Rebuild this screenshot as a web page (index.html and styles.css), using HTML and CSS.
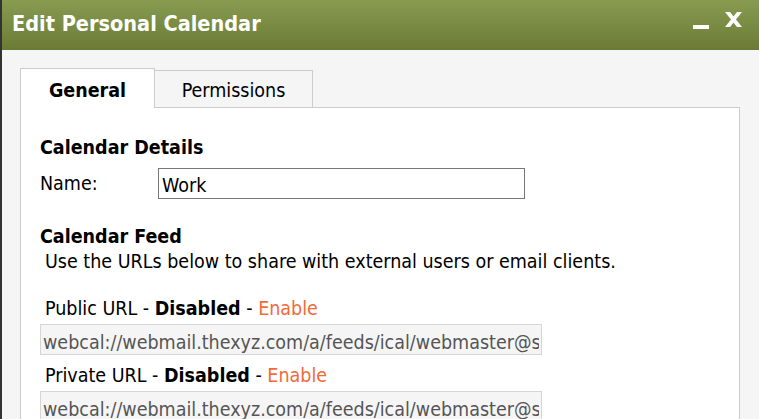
FILE: index.html
```html
<!DOCTYPE html>
<html lang="en">
<head>
    <title>Edit Personal Calendar</title>
    <meta charset="UTF-8" />
    <link rel="stylesheet" href="styles.css">
</head>
<body>
    <div class="window">
        <div class="titlebar">
            <span class="title">Edit Personal Calendar</span>
            <div class="win-controls">
                <span class="minimize"></span>
                <svg class="close" width="17" height="17" viewBox="0 0 17 17">
                    <polygon points="0,0 5,0 17,15 12,15" fill="#fff"/>
                    <polygon points="12,0 17,0 5,15 0,15" fill="#fff"/>
                </svg>
            </div>
        </div>

        <div class="content">
            <div class="tabs">
                <div class="tab active">General</div>
                <div class="tab">Permissions</div>
            </div>

            <div class="panel">
                <h3>Calendar Details</h3>
                <div class="field-row">
                    <label for="calName">Name:</label>
                    <input type="text" id="calName" class="name-input" value="Work">
                </div>

                <h3 class="feed-title">Calendar Feed</h3>
                <p class="feed-desc">Use the URLs below to share with external users or email clients.</p>

                <p class="url-label">Public URL - <b>Disabled</b> - <a href="#" class="enable">Enable</a></p>
                <input type="text" class="url-input" readonly value="webcal://webmail.thexyz.com/a/feeds/ical/webmaster@sample.com/work.ics">

                <p class="url-label private">Private URL - <b>Disabled</b> - <a href="#" class="enable">Enable</a></p>
                <input type="text" class="url-input" readonly value="webcal://webmail.thexyz.com/a/feeds/ical/webmaster@sample.com/private/work.ics">
            </div>
        </div>
    </div>
</body>
</html>
```
FILE: styles.css
```css
body {
    margin: 0;
    background: #f5f5f5;
    font-family: "DejaVu Sans Condensed", "DejaVu Sans", sans-serif;
    font-size: 19.5px;
    line-height: 24px;
    color: #000;
}
.window {
    border-left: 2px solid #333;
    height: 419px;
    box-sizing: border-box;
    overflow: hidden;
}
.titlebar {
    display: flex;
    align-items: center;
    height: 50px;
    box-sizing: border-box;
    padding: 0 0 3px 10px;
    background: linear-gradient(to bottom, #889b51, #6b7b36);
}
.title {
    color: #fff;
    font-weight: bold;
    font-size: 21.5px;
}
.win-controls {
    display: flex;
    align-items: flex-end;
    gap: 16px;
    margin-left: auto;
    margin-right: 17px;
    align-self: flex-start;
    margin-top: 12px;
}
.minimize {
    display: block;
    width: 16px;
    height: 4px;
    background: #fff;
}
.close {
    display: block;
}
.content {
    padding: 18px 19px 0 18px;
}
.tabs {
    display: flex;
    align-items: flex-start;
    height: 40px;
    margin-bottom: -1px;
}
.tab {
    box-sizing: border-box;
    text-align: center;
    border: 1px solid #ccc;
    border-bottom: none;
}
.tab.active {
    position: relative;
    width: 135px;
    height: 40px;
    padding-top: 10px;
    background: #fff;
    font-weight: bold;
}
.tab:not(.active) {
    width: 159px;
    height: 37px;
    margin-top: 2px;
    margin-left: -1px;
    padding-top: 8px;
    background: #f5f5f5;
}
.panel {
    background: #fff;
    border: 1px solid #ccc;
    padding: 28px 19px 40px;
}
h3 {
    margin: 0;
    font-size: 19.5px;
    line-height: 24px;
}
.field-row {
    display: flex;
    align-items: flex-start;
    margin-top: 8px;
}
.field-row label {
    width: 118px;
    padding-top: 4px;
}
input {
    font-family: inherit;
    font-size: 19.5px;
    line-height: 24px;
    box-sizing: border-box;
    height: 31px;
    margin: 0;
    outline: none;
}
.name-input {
    width: 367px;
    border: 1px solid #777;
    padding: 4px 3px 1px 3px;
    color: #000;
    background: #fff;
}
.feed-title {
    margin-top: 26px;
}
.feed-desc {
    margin: 1px 0 0 5px;
}
.url-label {
    margin: 23px 0 0 5px;
}
.url-label.private {
    margin-top: 9px;
}
.enable {
    color: #f26a38;
    text-decoration: none;
}
.url-input {
    display: block;
    width: 502px;
    margin-top: 3px;
    padding: 5px 2px 0 2px;
    border: 1px solid #d6d6d6;
    background: #f5f5f5;
    color: #555;
}
```
